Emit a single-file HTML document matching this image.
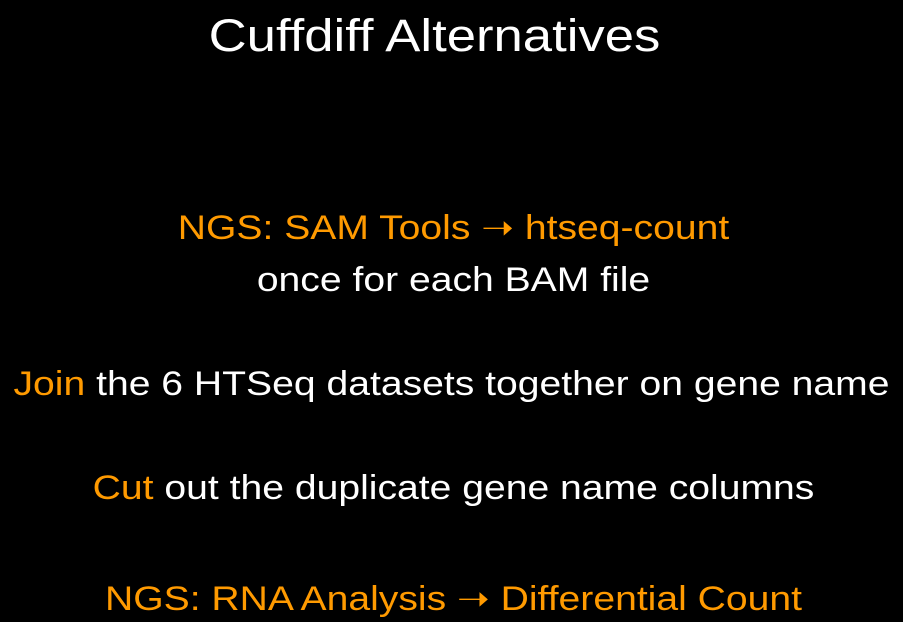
<!DOCTYPE html>
<html><head><style>
html,body{margin:0;padding:0;background:#000;}
body{width:903px;height:622px;position:relative;overflow:hidden;font-family:"Liberation Sans",sans-serif;color:#fff;}
.l{position:absolute;left:0;width:903px;text-align:center;white-space:nowrap;font-size:34px;line-height:1;transform:scaleX(1.15);transform-origin:center;}
.o{color:#ff9a00;}
</style></head><body>
<div class="l" style="top:13px;font-size:45px;left:-17px;transform:scaleX(1.17);">Cuffdiff Alternatives</div>
<div class="l o" style="top:211px;left:2px;">NGS: SAM Tools &#10141; htseq-count</div>
<div class="l" style="top:263px;left:2px;">once for each BAM file</div>
<div class="l" style="top:367px;left:0px;"><span class="o">Join</span> the 6 HTSeq datasets together on gene name</div>
<div class="l" style="top:471px;left:2px;"><span class="o">Cut</span> out the duplicate gene name columns</div>
<div class="l o" style="top:582px;left:2px;">NGS: RNA Analysis &#10141; Differential Count</div>
</body></html>
